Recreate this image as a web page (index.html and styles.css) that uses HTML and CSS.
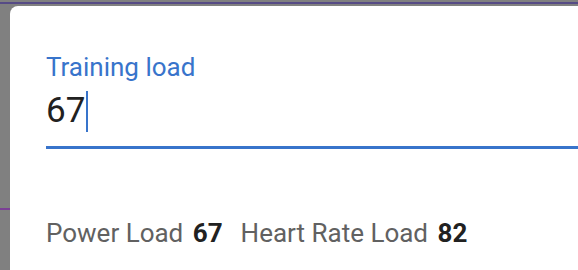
FILE: index.html
```html
<!DOCTYPE html>
<html lang="en">
<head>
<meta charset="UTF-8">
<meta name="viewport" content="width=device-width, initial-scale=1.0">
<title>Training load</title>
<link rel="stylesheet" href="styles.css">
</head>
<body>
<div class="dialog">
    <div class="field">
        <label class="field-label">Training load</label>
        <div class="field-input">
            <span class="field-value">67</span><span class="caret"></span>
        </div>
    </div>
    <div class="loads">
        <span class="load-item">Power Load <b>67</b></span>
        <span class="load-item">Heart Rate Load <b>82</b></span>
    </div>
</div>
</body>
</html>
```

FILE: styles.css
```css
html, body {
    height: 100%;
}
body {
    margin: 0;
    padding: 6px 0 0 10px;
    box-sizing: border-box;
    overflow: hidden;
    font-family: Roboto, "Noto Sans", sans-serif;
    background-color: #808080;
    background-image:
        linear-gradient(#564b86, #564b86),
        linear-gradient(#7b3f95, #7b3f95);
    background-size: 100% 2px, 10px 2px;
    background-position: 0 2px, 0 208px;
    background-repeat: no-repeat;
}
.dialog {
    height: 100%;
    background-color: #fff;
    border-radius: 8px 0 0 0;
    padding: 46px 0 0 36px;
    box-sizing: border-box;
}
.field-label {
    display: block;
    font-size: 26px;
    line-height: 30px;
    color: #3874cb;
}
.field-input {
    display: flex;
    align-items: flex-start;
    margin-top: 9px;
    padding-bottom: 14px;
    border-bottom: 3px solid #3874cb;
}
.field-value {
    font-size: 35px;
    line-height: 40px;
    color: #212121;
}
.caret {
    width: 2px;
    height: 41px;
    margin-left: 1px;
    background-color: #3874cb;
}
.loads {
    margin-top: 69px;
    display: flex;
    gap: 18px;
    font-size: 26px;
    line-height: 30px;
    color: #616161;
}
.load-item b {
    margin-left: 3px;
    color: #212121;
    font-weight: 700;
}
```
